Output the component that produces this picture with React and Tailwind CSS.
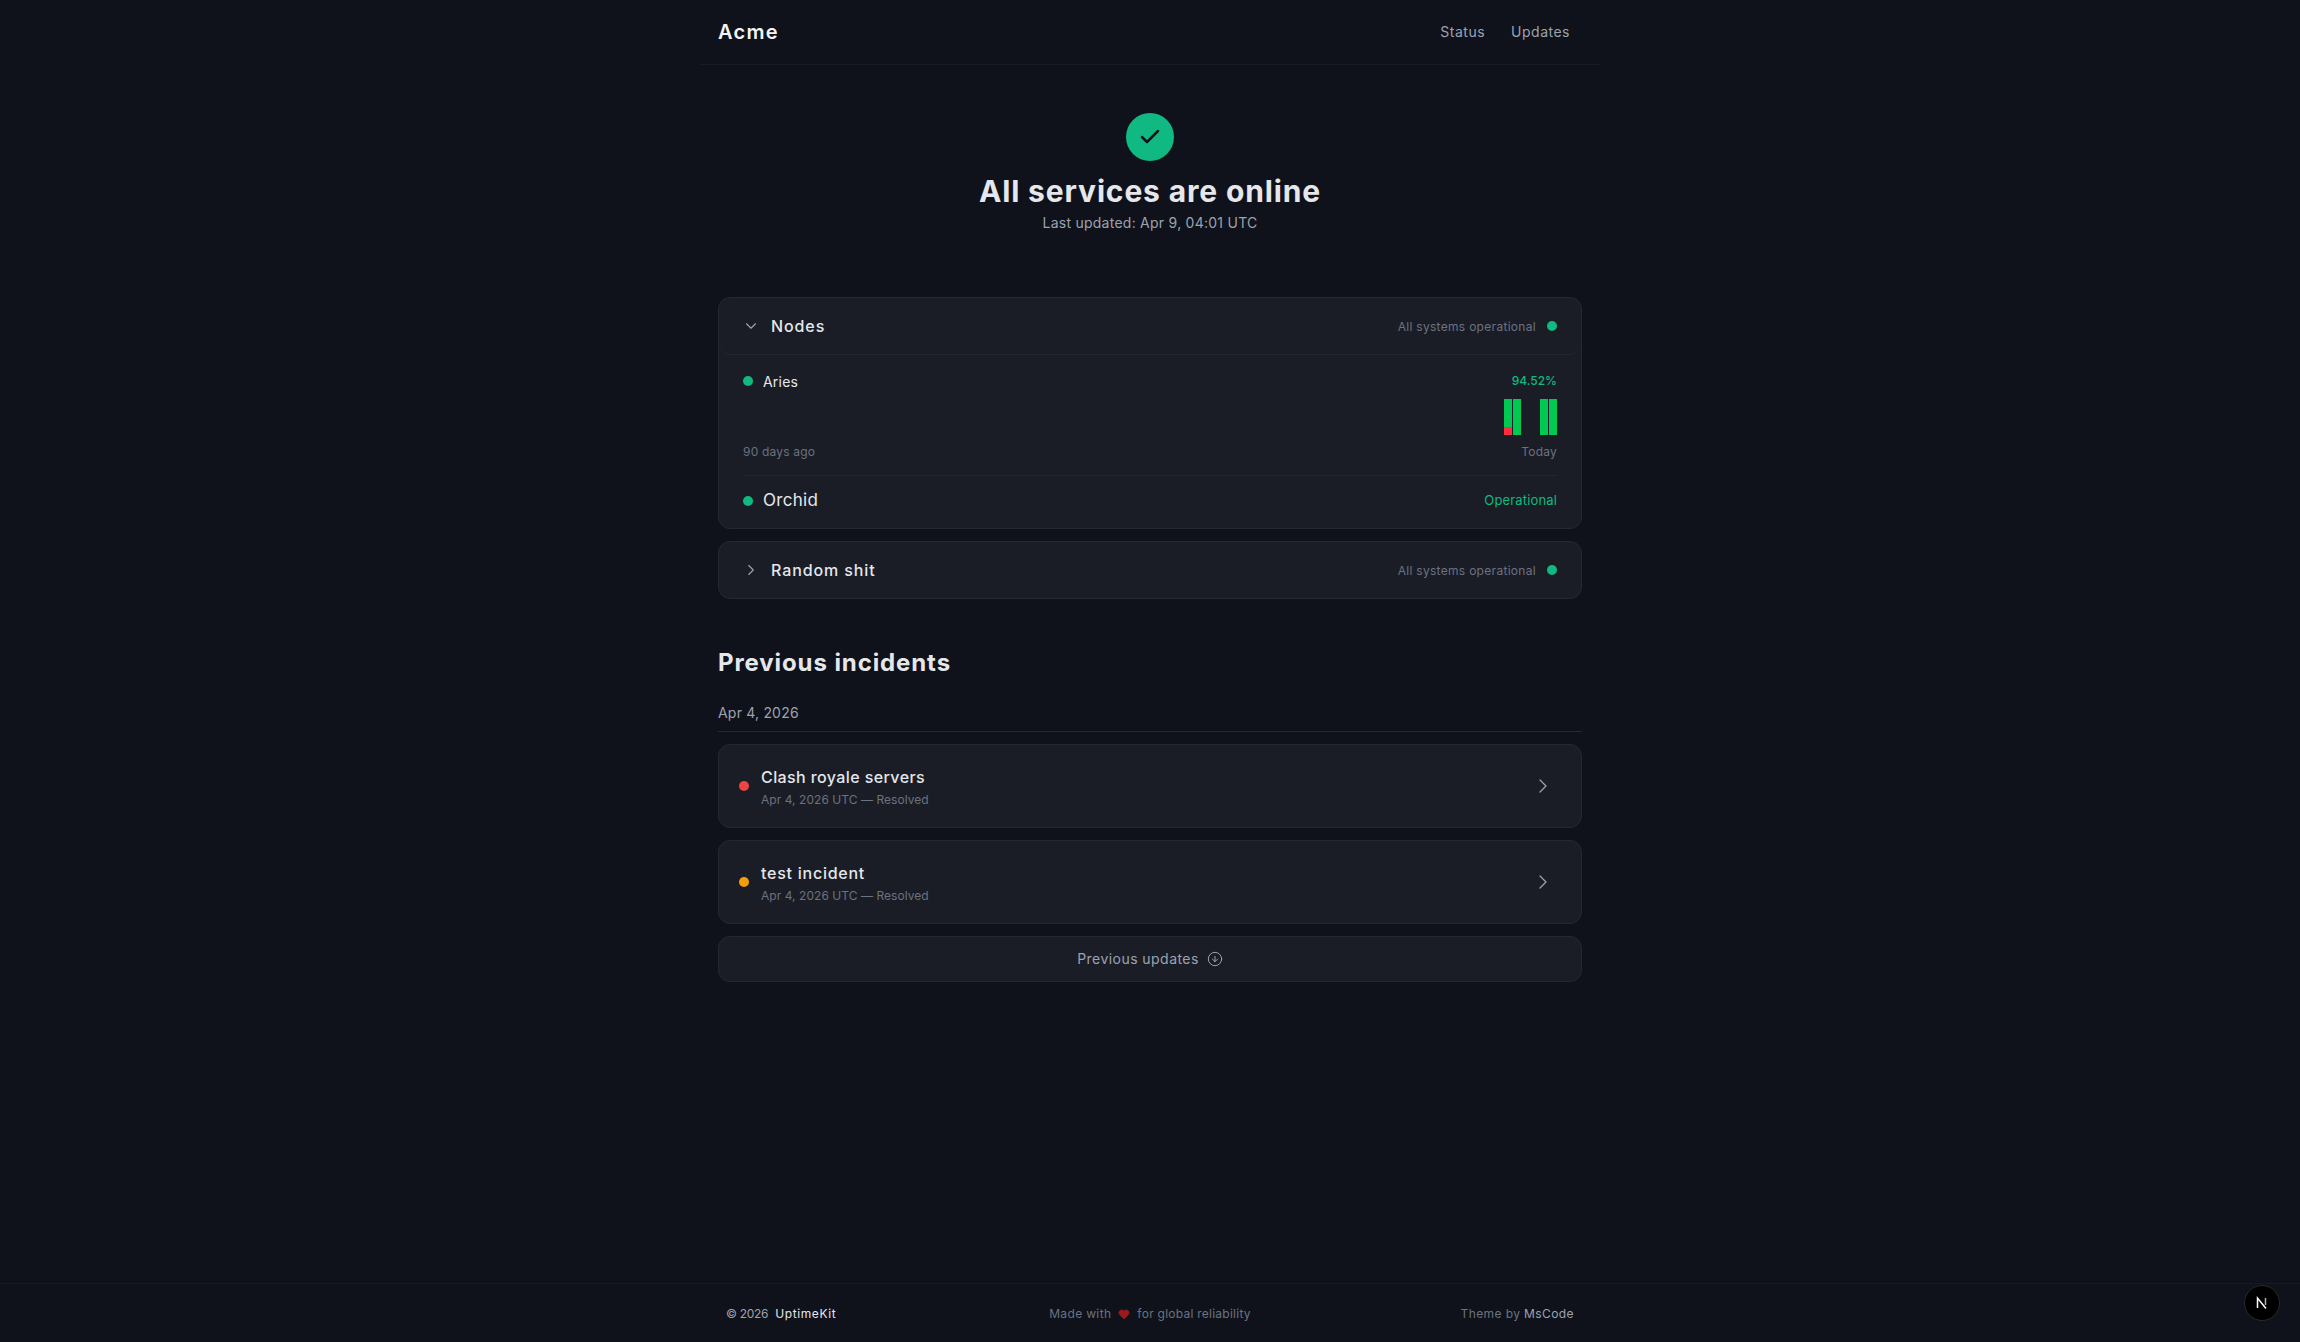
import React from "react";
import { Check, ChevronDown, ChevronRight, CircleArrowDown, Heart } from "lucide-react";

const Dot = ({ className = "bg-[#10b981]" }) => (
  <span className={`block w-[10px] h-[10px] rounded-full shrink-0 ${className}`} />
);

const GroupHeader = ({ title, open }) => (
  <div className={`flex items-center justify-between pl-[23px] pr-[24px] ${open ? "h-[57px] border-b border-[#222731] rounded-b-[12px]" : "h-[56px]"}`}>
    <div className="flex items-center gap-[11px]">
      {open ? (
        <ChevronDown size={18} strokeWidth={1.5} className="text-[#9ca3af]" />
      ) : (
        <ChevronRight size={18} strokeWidth={1.5} className="text-[#9ca3af]" />
      )}
      <span className="text-[16px] font-medium text-[#e5e7eb] tracking-[0.9px]">{title}</span>
    </div>
    <div className="flex items-center gap-[11px]">
      <span className="pt-[1px] text-[12px] text-[#6b7280] tracking-[0.3px]">All systems operational</span>
      <Dot />
    </div>
  </div>
);

const IncidentCard = ({ title, color, tracking }) => (
  <div className="flex items-center h-[84px] bg-[#1a1d26] border border-[#232832] rounded-[12px] pl-[20px] pr-[26px]">
    <Dot className={color} />
    <div className="ml-[12px] flex-1 pt-[2px]">
      <div className={`text-[16px] font-medium leading-[22px] text-[#e5e7eb] ${tracking}`}>{title}</div>
      <div className="mt-[3px] text-[12px] leading-[18px] text-[#6b7280] tracking-[0.05px]">Apr 4, 2026 UTC — Resolved</div>
    </div>
    <ChevronRight size={24} strokeWidth={1.25} className="text-[#9ca3af]" />
  </div>
);

const App = () => {
  return (
    <div className="min-h-screen h-[1342px] flex flex-col bg-[#0f121b] text-[#e5e7eb] font-['Inter',sans-serif] overflow-hidden">
      <div className="flex-1 w-[900px] mx-auto">
        {/* Header */}
        <header className="h-[65px] flex items-center justify-between px-[18px] border-b border-[#161a23]">
          <span className="text-[20px] font-semibold text-[#f3f4f6] tracking-[1.3px]">Acme</span>
          <nav className="flex items-center gap-[2px] pb-[1px]">
            <a className="px-[12px] text-[14px] text-[#9ca3af] tracking-[0.5px]">Status</a>
            <a className="px-[12px] text-[14px] text-[#9ca3af] tracking-[0.5px]">Updates</a>
          </nav>
        </header>

        {/* Hero */}
        <section className="flex flex-col items-center pt-[48px]">
          <div className="w-[48px] h-[48px] rounded-full bg-[#10b981] flex items-center justify-center">
            <Check size={24} strokeWidth={2.5} className="text-[#0f121b]" />
          </div>
          <h1 className="mt-[11px] text-[30px] leading-[38px] font-bold text-[#e5e7eb] tracking-[0.86px]">All services are online</h1>
          <p className="mt-[3px] text-[14px] leading-[20px] text-[#9ca3af] tracking-[0.25px]">Last updated: Apr 9, 04:01 UTC</p>
        </section>

        <main className="px-[18px] mt-[64px]">
          {/* Groups */}
          <div className="bg-[#1a1d26] border border-[#232832] rounded-[12px]">
            <GroupHeader title="Nodes" open />
            <div className="px-[24px]">
              <div className="h-[121px] border-b border-[#212630] flex flex-col">
                <div className="flex justify-between pt-[16px]">
                  <div className="flex items-center gap-[10px] h-[20px]">
                    <Dot />
                    <span className="text-[14px] text-[#e5e7eb] tracking-[0.2px]">Aries</span>
                  </div>
                  <div className="flex flex-col items-end">
                    <span className="text-[12px] leading-[20px] font-medium text-[#10b981]">94.52%</span>
                    <div className="mt-[8px] flex gap-[1px] h-[36px]">
                      <div className="w-[8px] flex flex-col bg-[#00c853] justify-end">
                        <div className="h-[8px] bg-[#ff2d3d]" />
                      </div>
                      <div className="w-[8px] bg-[#00c853]" />
                      <div className="w-[17px]" />
                      <div className="w-[8px] bg-[#00c853]" />
                      <div className="w-[8px] bg-[#00c853]" />
                    </div>
                  </div>
                </div>
                <div className="mt-[8px] flex justify-between text-[12px] leading-[18px] text-[#6b7280] tracking-[0.2px]">
                  <span>90 days ago</span>
                  <span>Today</span>
                </div>
              </div>
              <div className="h-[52px] pb-[2px] flex items-center justify-between">
                <div className="flex items-center gap-[10px]">
                  <Dot />
                  <span className="text-[17px] text-[#e5e7eb] tracking-[0.3px]">Orchid</span>
                </div>
                <span className="text-[13px] text-[#10b981] tracking-[0.15px]">Operational</span>
              </div>
            </div>
          </div>

          <div className="mt-[12px] bg-[#1a1d26] border border-[#232832] rounded-[12px]">
            <GroupHeader title="Random shit" />
          </div>

          {/* Incidents */}
          <h2 className="mt-[48px] text-[24px] leading-[32px] font-bold text-[#e5e7eb] tracking-[0.9px]">Previous incidents</h2>
          <div className="mt-[24px] pb-[8px] text-[14px] leading-[20px] text-[#9ca3af] border-b border-[#232832] tracking-[0.2px]">Apr 4, 2026</div>
          <div className="mt-[12px] flex flex-col gap-[12px]">
            <IncidentCard title="Clash royale servers" color="bg-[#ef4444]" tracking="tracking-[0.4px]" />
            <IncidentCard title="test incident" color="bg-[#f59e0b]" tracking="tracking-[0.75px]" />
            <button className="h-[46px] pb-[1px] flex items-center justify-center gap-[8px] bg-[#1a1d26] border border-[#232832] rounded-[12px] text-[14px] text-[#9ca3af] tracking-[0.45px]">
              Previous updates
              <CircleArrowDown size={16} strokeWidth={1.5} />
            </button>
          </div>
        </main>
      </div>

      {/* Footer */}
      <footer className="h-[59px] border-t border-[#161a23]">
        <div className="w-[900px] h-full mx-auto pt-[2px] px-[26px] flex items-center justify-between text-[12px] text-[#6b7280] tracking-[0.25px]">
          <div className="flex items-center gap-[7px] w-[200px]">
            <span className="text-[#9ca3af] tracking-[-0.3px]">© 2026</span>
            <span className="text-[#e5e7eb] tracking-[0.6px]">UptimeKit</span>
          </div>
          <div className="flex items-center gap-[7px]">
            <span className="tracking-[0.35px]">Made with</span>
            <Heart size={12} className="text-[#991b1b] fill-[#991b1b]" />
            <span>for global reliability</span>
          </div>
          <div className="w-[200px] text-right tracking-[0.4px]">
            Theme by <span className="text-[#9ca3af]">MsCode</span>
          </div>
        </div>
      </footer>

      {/* Dev indicator */}
      <div className="fixed left-[2244px] top-[1285px] w-[36px] h-[36px] rounded-full bg-black border border-[#2a2a2a] flex items-center justify-center">
        <svg width="16" height="16" viewBox="0 0 16 16" fill="none">
          <path d="M3.5 13V3L12 13.5" stroke="#fff" strokeWidth="1.5" />
          <path d="M11.5 3v7" stroke="#fff" strokeWidth="1.5" strokeOpacity="0.7" />
        </svg>
      </div>
    </div>
  );
};

export default App;
